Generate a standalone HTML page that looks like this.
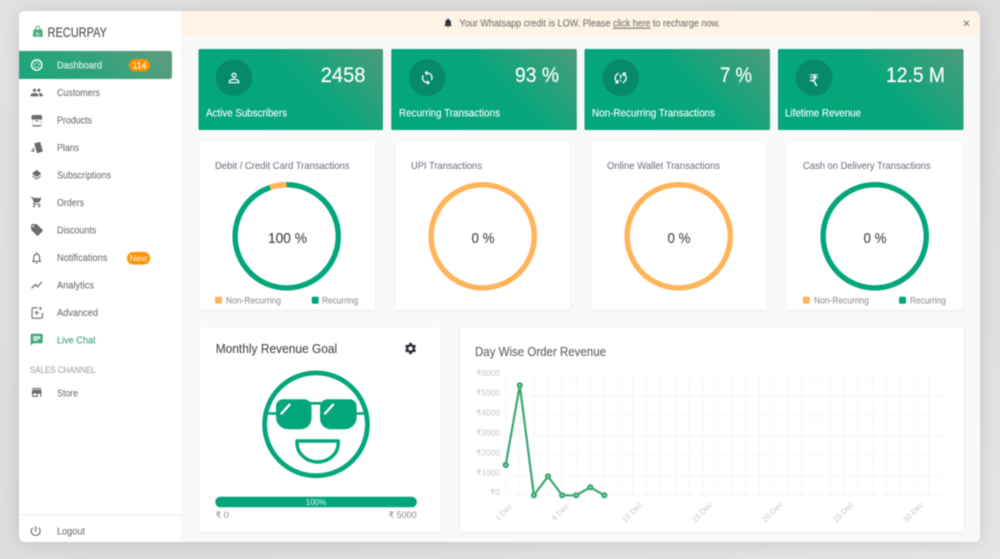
<!DOCTYPE html>
<html><head><meta charset="utf-8"><title>Recurpay Dashboard</title>
<style>
html,body{margin:0;padding:0;width:1000px;height:559px;overflow:hidden;background:#dedede}
svg{display:block;filter:blur(.45px)}
text{font-family:"Liberation Sans","DejaVu Sans",sans-serif}
.m{font-size:10.3px;fill:#717171;stroke:#717171;stroke-width:.1}
.t{font-size:10.4px;fill:#737382;stroke:#737382;stroke-width:.06}
.s{font-size:10.8px;fill:#fff;stroke:#fff;stroke-width:.1}
.n{font-size:21.5px;fill:#fff;stroke:#fff;stroke-width:.15}
.c{font-size:15px;fill:#444;stroke:#444;stroke-width:.1}
.l{font-size:9.4px;fill:#8b8b97;stroke:#8b8b97;stroke-width:.05}
.y{font-size:8.2px;fill:#c6c6c6;text-anchor:end}
.x{font-size:7.8px;fill:#c6c6c6;text-anchor:middle}
.g{stroke:#f4f4f2;stroke-width:.8}
.b{font-size:9.8px;fill:#6c6c6c;stroke:#6c6c6c;stroke-width:.05}
</style></head>
<body>
<svg width="1000" height="559" viewBox="0 0 1000 559" xmlns="http://www.w3.org/2000/svg">
<defs>
<linearGradient id="bg" x1="0" y1="0" x2="1" y2="1"><stop offset="0" stop-color="#e3e3e3"/><stop offset=".6" stop-color="#dcdcdc"/><stop offset="1" stop-color="#e6e6e6"/></linearGradient>
<linearGradient id="s1" gradientUnits="userSpaceOnUse" x1="273" y1="159" x2="383" y2="49"><stop offset="0" stop-color="#03a77b"/><stop offset=".5" stop-color="#0aa67b"/><stop offset="1" stop-color="#4c9b7b"/></linearGradient>
<linearGradient id="s2" gradientUnits="userSpaceOnUse" x1="467" y1="159" x2="577" y2="49"><stop offset="0" stop-color="#03a77b"/><stop offset=".5" stop-color="#0aa67b"/><stop offset="1" stop-color="#4c9b7b"/></linearGradient>
<linearGradient id="s3" gradientUnits="userSpaceOnUse" x1="660" y1="159" x2="770" y2="49"><stop offset="0" stop-color="#03a77b"/><stop offset=".5" stop-color="#0aa67b"/><stop offset="1" stop-color="#4c9b7b"/></linearGradient>
<linearGradient id="s4" gradientUnits="userSpaceOnUse" x1="853" y1="159" x2="963" y2="49"><stop offset="0" stop-color="#03a77b"/><stop offset=".5" stop-color="#0aa67b"/><stop offset="1" stop-color="#4c9b7b"/></linearGradient>
<linearGradient id="ac" gradientUnits="userSpaceOnUse" x1="62" y1="161" x2="172" y2="51"><stop offset="0" stop-color="#14a67b"/><stop offset=".55" stop-color="#2fa37c"/><stop offset="1" stop-color="#5f9c7f"/></linearGradient>
<filter id="sh" x="-10%" y="-10%" width="120%" height="120%"><feDropShadow dx="0" dy="0" stdDeviation="9" flood-color="#000" flood-opacity=".13"/></filter>
<filter id="cs" x="-5%" y="-5%" width="110%" height="110%"><feDropShadow dx="0" dy=".6" stdDeviation="1" flood-color="#000" flood-opacity=".09"/></filter>
<clipPath id="win"><rect x="19" y="11" width="961" height="531" rx="6"/></clipPath>
</defs>
<rect width="1000" height="559" fill="url(#bg)"/>
<rect x="19" y="11" width="961" height="531" rx="6" fill="#f9f9f9" filter="url(#sh)"/>
<g clip-path="url(#win)">
<rect x="19" y="11" width="163" height="531" fill="#fff"/>
<rect x="181.5" y="11" width=".8" height="531" fill="#f0f0f0"/>
<rect x="182" y="11" width="798" height="25" fill="#fef3e5"/>
<rect x="19" y="50" width="163" height=".7" fill="#f4f4f4"/>
<rect x="19" y="514.5" width="163" height=".8" fill="#ececec"/>
</g>

<!-- logo -->
<path d="M33.5 29.5h8.8l.6 7.3h-10z" fill="#45ab7a"/>
<path d="M35.7 30v-1.6a2.1 2.1 0 0 1 4.2 0V30" fill="none" stroke="#45ab7a" stroke-width="1"/>
<path d="M35.5 32.2a3.5 3.5 0 0 1 3.6 3.6M35.5 34a1.7 1.7 0 0 1 1.8 1.8" fill="none" stroke="#fff" stroke-width=".7"/>
<text x="47.5" y="36.8" font-size="13.8" fill="#4a4a4a" stroke="#4a4a4a" stroke-width=".06" textLength="59.5" lengthAdjust="spacingAndGlyphs">RECURPAY</text>

<!-- active -->
<path d="M19 51h150.5a2.5 2.5 0 0 1 2.5 2.5v23a2.5 2.5 0 0 1-2.5 2.5H19z" fill="url(#ac)"/>
<circle cx="36.7" cy="65" r="5.2" fill="none" stroke="#fff" stroke-width="1.4"/>
<g fill="#fff"><circle cx="36.7" cy="62.4" r=".8"/><circle cx="34.3" cy="64.2" r=".8"/><circle cx="39.1" cy="64.2" r=".8"/><circle cx="35.2" cy="67.1" r=".8"/><circle cx="38.2" cy="67.1" r=".8"/></g>
<text x="57" y="68.6" class="m" style="fill:#e9f5f0;stroke:#e9f5f0" textLength="45" lengthAdjust="spacingAndGlyphs">Dashboard</text>
<rect x="129" y="59" width="21" height="12.5" rx="6.2" fill="#ff9100"/>
<text x="139.5" y="68.3" font-size="9" fill="#fff1dc" stroke="#fff1dc" stroke-width=".15" text-anchor="middle">114</text>

<!-- menu -->
<text x="57" y="96.1" class="m" textLength="43" lengthAdjust="spacingAndGlyphs">Customers</text>
<text x="57" y="123.6" class="m" textLength="35" lengthAdjust="spacingAndGlyphs">Products</text>
<text x="57" y="151.1" class="m" textLength="22" lengthAdjust="spacingAndGlyphs">Plans</text>
<text x="57" y="178.6" class="m" textLength="54" lengthAdjust="spacingAndGlyphs">Subscriptions</text>
<text x="57" y="206.1" class="m" textLength="27" lengthAdjust="spacingAndGlyphs">Orders</text>
<text x="57" y="233.6" class="m" textLength="39.3" lengthAdjust="spacingAndGlyphs">Discounts</text>
<text x="57" y="261.1" class="m" textLength="50.5" lengthAdjust="spacingAndGlyphs">Notifications</text>
<text x="57" y="288.6" class="m" textLength="37" lengthAdjust="spacingAndGlyphs">Analytics</text>
<text x="57" y="316.1" class="m" textLength="41" lengthAdjust="spacingAndGlyphs">Advanced</text>
<text x="57" y="343.6" class="m" style="fill:#3fa67c;stroke:#3fa67c" textLength="38.5" lengthAdjust="spacingAndGlyphs">Live Chat</text>
<text x="30" y="372.8" font-size="9.3" fill="#a2a2a2" stroke="#a2a2a2" stroke-width=".08" textLength="65.5" lengthAdjust="spacingAndGlyphs">SALES CHANNEL</text>
<text x="57" y="396.6" class="m" textLength="21" lengthAdjust="spacingAndGlyphs">Store</text>
<text x="57" y="534.6" class="m" textLength="28" lengthAdjust="spacingAndGlyphs">Logout</text>

<rect x="127" y="252" width="23" height="12.5" rx="6.2" fill="#ff9100" stroke="#ffc069" stroke-width=".7"/>
<text x="138.5" y="261.4" font-size="8.8" fill="#ffe7c6" stroke="#ffe7c6" stroke-width=".1" text-anchor="middle">New</text>

<!-- menu icons -->
<g fill="#6c6c6c">
<path transform="translate(30.1 85.9) scale(.55)" d="M16 11c1.66 0 2.99-1.34 2.99-3S17.66 5 16 5c-1.66 0-3 1.34-3 3s1.34 3 3 3zm-8 0c1.66 0 2.99-1.34 2.99-3S9.66 5 8 5C6.34 5 5 6.34 5 8s1.34 3 3 3zm0 2c-2.33 0-7 1.17-7 3.5V19h14v-2.5c0-2.33-4.67-3.5-7-3.5zm8 0c-.29 0-.62.02-.97.05 1.16.84 1.97 1.97 1.97 3.45V19h6v-2.5c0-2.33-4.67-3.5-7-3.5z"/>
<path d="M33 115h7.6a1.5 1.5 0 0 1 1.5 1.5v3h-.9v6.2a.8.8 0 0 1-.8.8h-7.2a.8.8 0 0 1-.8-.8v-6.2h-.9v-3a1.5 1.5 0 0 1 1.5-1.5zm-.3 4.5v5.8h8.2v-5.8z" fill-rule="evenodd"/>
<rect x="35" y="120.4" width="3.6" height="1" fill="#6c6c6c"/>
<path d="M34.9 143.3l4.4-1.3a.8.8 0 0 1 1 .5l2.4 8.2a.8.8 0 0 1-.5 1l-4.4 1.3a.8.8 0 0 1-1-.5l-2.4-8.2a.8.8 0 0 1 .5-1z"/>
<path d="M33.6 146.5l-1.5 4.8 2.3.8zM31.6 149.5l-.8 2.2 1.1.4z"/>
<path transform="translate(30.4 168.8) scale(.52)" d="M11.99 18.54l-7.37-5.73L3 14.07l9 7 9-7-1.63-1.27-7.38 5.74zM12 16l7.36-5.73L21 9l-9-7-9 7 1.63 1.27L12 16z"/>
<path transform="translate(30.4 195.8) scale(.52)" d="M7 18c-1.1 0-1.99.9-1.99 2S5.9 22 7 22s2-.9 2-2-.9-2-2-2zM1 2v2h2l3.6 7.59-1.35 2.45c-.16.28-.25.61-.25.96 0 1.1.9 2 2 2h12v-2H7.42c-.14 0-.25-.11-.25-.25l.03-.12.9-1.63h7.45c.75 0 1.41-.41 1.75-1.03l3.58-6.49c.08-.14.12-.31.12-.48 0-.55-.45-1-1-1H5.21l-.94-2H1zm16 16c-1.1 0-1.99.9-1.99 2s.89 2 1.99 2 2-.9 2-2-.9-2-2-2z"/>
<path transform="translate(30 223) scale(.58)" d="M21.41 11.58l-9-9C12.05 2.22 11.55 2 11 2H4c-1.1 0-2 .9-2 2v7c0 .55.22 1.05.59 1.42l9 9c.36.36.86.58 1.41.58.55 0 1.05-.22 1.41-.59l7-7c.37-.36.59-.86.59-1.41 0-.55-.23-1.06-.59-1.42zM5.5 7C4.67 7 4 6.33 4 5.5S4.67 4 5.5 4 7 4.67 7 5.5 6.33 7 5.5 7z"/>
<path transform="translate(29.7 251) scale(.58)" d="M12 22c1.1 0 2-.9 2-2h-4c0 1.1.9 2 2 2zm6-6v-5c0-3.07-1.63-5.64-4.5-6.32V4c0-.83-.67-1.5-1.5-1.5s-1.5.67-1.5 1.5v.68C7.64 5.36 6 7.92 6 11v5l-2 2v1h16v-1l-2-2zm-2 1H8v-6c0-2.48 1.51-4.5 4-4.5s4 2.02 4 4.5v6z"/>
<path transform="translate(29.9 278.2) scale(.57)" d="M3.5 18.49l6-6.01 4 4L22 6.92l-1.41-1.41-7.09 7.97-4-4L2 16.99z"/>
<path transform="translate(30 385.7) scale(.56)" d="M20 4H4v2h16V4zm1 10v-2l-1-5H4l-1 5v2h1v6h10v-6h4v6h2v-6h1zm-9 4H6v-4h6v4z"/>
<path transform="translate(29 524.3) scale(.56)" d="M13 3h-2v10h2V3zm4.83 2.17l-1.42 1.42C17.99 7.86 19 9.81 19 12c0 3.87-3.13 7-7 7s-7-3.13-7-7c0-2.19 1.01-4.14 2.58-5.42L6.17 5.17C4.23 6.82 3 9.26 3 12c0 4.97 4.03 9 9 9s9-4.03 9-9c0-2.74-1.23-5.18-3.17-6.83z"/>
</g>
<path d="M37.5 307.8h-4.5a1 1 0 0 0-1 1v8.4a1 1 0 0 0 1 1h8.4a1 1 0 0 0 1-1v-4.5" fill="none" stroke="#6c6c6c" stroke-width="1.1"/>
<path d="M36.7 310.5v4.5M34.5 312.7h4.5M40.4 307v3M38.9 308.5h3" stroke="#6c6c6c" stroke-width="1" fill="none"/>
<path transform="translate(29.5 332.5) scale(.6)" fill="#3fa67c" d="M20 2H4c-1.1 0-1.99.9-1.99 2L2 22l4-4h14c1.1 0 2-.9 2-2V4c0-1.1-.9-2-2-2zM6 9h12v2H6V9zm8 5H6v-2h8v2zm4-6H6V6h12v2z"/>

<!-- banner -->
<path transform="translate(442.6 17.3) scale(.46)" fill="#2a3140" d="M12 22c1.1 0 2-.9 2-2h-4c0 1.1.89 2 2 2zm6-6v-5c0-3.07-1.64-5.64-4.5-6.32V4c0-.83-.67-1.5-1.5-1.5s-1.5.67-1.5 1.5v.68C7.63 5.36 6 7.92 6 11v5l-2 2v1h16v-1l-2-2z"/>
<text x="459.5" y="26.7" class="b" textLength="151" lengthAdjust="spacingAndGlyphs">Your Whatsapp credit is LOW. Please</text>
<text x="613" y="26.7" class="b" text-decoration="underline" textLength="37.5" lengthAdjust="spacingAndGlyphs">click here</text>
<text x="652.7" y="26.7" class="b" textLength="67.5" lengthAdjust="spacingAndGlyphs">to recharge now.</text>
<path d="M964 20.8l5 5M969 20.8l-5 5" stroke="#666" stroke-width=".95"/>

<!-- stat cards -->
<g>
<rect x="198.5" y="49" width="184.5" height="81" rx="1.5" fill="url(#s1)"/>
<rect x="391.3" y="49" width="185.5" height="81" rx="1.5" fill="url(#s2)"/>
<rect x="584.5" y="49" width="185.5" height="81" rx="1.5" fill="url(#s3)"/>
<rect x="778" y="49" width="185.5" height="81" rx="1.5" fill="url(#s4)"/>
<g fill="#068a68"><circle cx="234" cy="77.7" r="18.3"/><circle cx="427.3" cy="77.7" r="18.3"/><circle cx="620.7" cy="77.7" r="18.3"/><circle cx="814" cy="77.7" r="18.3"/></g>
<path transform="translate(226.1 70) scale(.66)" fill="#fff" d="M12 5.9c1.16 0 2.1.94 2.1 2.1s-.94 2.1-2.1 2.1S9.9 9.16 9.9 8s.94-2.1 2.1-2.1m0 9c2.97 0 6.1 1.46 6.1 2.1v1.1H5.9V17c0-.64 3.13-2.1 6.1-2.1M12 4C9.79 4 8 5.79 8 8s1.79 4 4 4 4-1.79 4-4-1.79-4-4-4zm0 9c-2.67 0-8 1.34-8 4v3h16v-3c0-2.66-5.33-4-8-4z"/>
<path transform="translate(419.1 69.6) scale(.68)" fill="#fff" d="M12 4V1L8 5l4 4V6c3.31 0 6 2.69 6 6 0 1.01-.25 1.97-.7 2.8l1.46 1.46C19.54 15.03 20 13.57 20 12c0-4.42-3.58-8-8-8zm0 14c-3.31 0-6-2.69-6-6 0-1.01.25-1.97.7-2.8L5.24 7.74C4.46 8.97 4 10.43 4 12c0 4.42 3.58 8 8 8v3l4-4-4-4v3z"/>
<path transform="translate(612.5 69.8) scale(.68)" fill="#fff" d="M3 12c0 2.21.91 4.2 2.36 5.64L3 20h6v-6l-2.24 2.24C5.68 15.15 5 13.66 5 12c0-2.61 1.67-4.83 4-5.65V4.26C5.55 5.15 3 8.27 3 12zm8 5h2v-2h-2v2zM21 4h-6v6l2.24-2.24C18.32 8.85 19 10.34 19 12c0 2.61-1.67 4.83-4 5.65v2.09c3.45-.89 6-4.01 6-7.74 0-2.21-.91-4.2-2.36-5.64L21 4zm-10 9h2V7h-2v6z"/>
<text x="814" y="86" font-size="16" fill="#fff" text-anchor="middle">₹</text>
<text x="320.7" y="81.8" class="n" textLength="44.8" lengthAdjust="spacingAndGlyphs">2458</text>
<text x="515" y="81.8" class="n" textLength="44" lengthAdjust="spacingAndGlyphs">93 %</text>
<text x="720" y="81.8" class="n" textLength="32" lengthAdjust="spacingAndGlyphs">7 %</text>
<text x="886" y="81.8" class="n" textLength="59" lengthAdjust="spacingAndGlyphs">12.5 M</text>
<text x="206" y="116.4" class="s" textLength="81" lengthAdjust="spacingAndGlyphs">Active Subscribers</text>
<text x="399" y="116.4" class="s" textLength="101" lengthAdjust="spacingAndGlyphs">Recurring Transactions</text>
<text x="592" y="116.4" class="s" textLength="123" lengthAdjust="spacingAndGlyphs">Non-Recurring Transactions</text>
<text x="785" y="116.4" class="s" textLength="76" lengthAdjust="spacingAndGlyphs">Lifetime Revenue</text>
</g>

<!-- donut cards -->
<g fill="#fff" filter="url(#cs)">
<rect x="199" y="142" width="176" height="168" rx="1.5"/>
<rect x="395" y="142" width="175.5" height="168" rx="1.5"/>
<rect x="591" y="142" width="175.5" height="168" rx="1.5"/>
<rect x="786.7" y="142" width="176" height="168" rx="1.5"/>
</g>
<text x="215" y="169.2" class="t" textLength="134.5" lengthAdjust="spacingAndGlyphs">Debit / Credit Card Transactions</text>
<text x="411" y="169.2" class="t" textLength="71" lengthAdjust="spacingAndGlyphs">UPI Transactions</text>
<text x="607" y="169.2" class="t" textLength="113" lengthAdjust="spacingAndGlyphs">Online Wallet Transactions</text>
<text x="803" y="169.2" class="t" textLength="127.5" lengthAdjust="spacingAndGlyphs">Cash on Delivery Transactions</text>

<g fill="none" stroke-width="5.4">
<circle cx="286.7" cy="236.3" r="51.6" stroke="#03a67b"/>
<path d="M270 187.5A51.6 51.6 0 0 1 286.7 184.7" stroke="#ffb45a"/>
<circle cx="482.7" cy="236.3" r="51.6" stroke="#ffb45a"/>
<circle cx="678.7" cy="236.3" r="51.6" stroke="#ffb45a"/>
<circle cx="874.7" cy="236.3" r="51.6" stroke="#03a67b"/>
</g>
<text x="268" y="243" class="c" textLength="39" lengthAdjust="spacingAndGlyphs">100 %</text>
<text x="471.5" y="243" class="c" textLength="23" lengthAdjust="spacingAndGlyphs">0 %</text>
<text x="667.5" y="243" class="c" textLength="23" lengthAdjust="spacingAndGlyphs">0 %</text>
<text x="863.5" y="243" class="c" textLength="23" lengthAdjust="spacingAndGlyphs">0 %</text>

<rect x="215" y="296.7" width="7" height="7" rx="1.2" fill="#ffb45a"/>
<text x="226" y="303.4" class="l" textLength="55" lengthAdjust="spacingAndGlyphs">Non-Recurring</text>
<rect x="311.7" y="296.7" width="7" height="7" rx="1.2" fill="#03a67b"/>
<text x="322" y="303.4" class="l" textLength="36" lengthAdjust="spacingAndGlyphs">Recurring</text>
<rect x="802.8" y="296.7" width="7" height="7" rx="1.2" fill="#ffb45a"/>
<text x="814" y="303.4" class="l" textLength="55" lengthAdjust="spacingAndGlyphs">Non-Recurring</text>
<rect x="899" y="296.7" width="7" height="7" rx="1.2" fill="#03a67b"/>
<text x="910" y="303.4" class="l" textLength="36" lengthAdjust="spacingAndGlyphs">Recurring</text>

<!-- bottom cards -->
<g fill="#fff" filter="url(#cs)">
<rect x="199" y="327" width="242" height="205" rx="1.5"/>
<rect x="460" y="327" width="504" height="205" rx="1.5"/>
</g>
<text x="215.7" y="352.8" font-size="13" fill="#444" stroke="#444" stroke-width=".06" textLength="121.5" lengthAdjust="spacingAndGlyphs">Monthly Revenue Goal</text>
<path transform="translate(403.5 341.5) scale(.585)" fill="#2b2f36" d="M19.14 12.94c.04-.3.06-.61.06-.94 0-.32-.02-.64-.07-.94l2.03-1.58c.18-.14.23-.41.12-.61l-1.92-3.32c-.12-.22-.37-.29-.59-.22l-2.39.96c-.5-.38-1.03-.7-1.62-.94l-.36-2.54c-.04-.24-.24-.41-.48-.41h-3.84c-.24 0-.43.17-.47.41l-.36 2.54c-.59.24-1.13.57-1.62.94l-2.39-.96c-.22-.08-.47 0-.59.22L2.74 8.87c-.12.21-.08.47.12.61l2.03 1.58c-.05.3-.09.63-.09.94s.02.64.07.94l-2.03 1.58c-.18.14-.23.41-.12.61l1.92 3.32c.12.22.37.29.59.22l2.39-.96c.5.38 1.03.7 1.62.94l.36 2.54c.05.24.24.41.48.41h3.84c.24 0 .44-.17.47-.41l.36-2.54c.59-.24 1.13-.56 1.62-.94l2.39.96c.22.08.47 0 .59-.22l1.92-3.32c.12-.22.07-.47-.12-.61l-2.01-1.58zM12 15.6c-1.98 0-3.6-1.62-3.6-3.6s1.62-3.6 3.6-3.6 3.6 1.62 3.6 3.6-1.62 3.6-3.6 3.6z"/>

<!-- smiley -->
<circle cx="316" cy="424.3" r="51.4" fill="none" stroke="#03a67b" stroke-width="4.8"/>
<path d="M267.5 413.5h9M356 413.5h9M310 403.3h11" stroke="#03a67b" stroke-width="2.6" fill="none"/>
<path d="M283 399.3h21a7.5 7.5 0 0 1 7.5 7.5v11.5a11 11 0 0 1-11 11H288a12 12 0 0 1-12-12v-11a7 7 0 0 1 7-7z" fill="#03a67b"/>
<path d="M328 399.3h21.7a7 7 0 0 1 7 7v11a12 12 0 0 1-12 12H331a11 11 0 0 1-11-11v-11.5a7.5 7.5 0 0 1 8-7.5z" fill="#03a67b"/>
<path d="M281.5 413.5l8-8.8M325 413.5l8-8.8" stroke="#fff" stroke-width="2.4" stroke-linecap="round" fill="none"/>
<path d="M297 441h41.3v2a20.65 19 0 0 1-41.3 0z" fill="#fff" stroke="#03a67b" stroke-width="3.4" stroke-linejoin="round"/>

<!-- progress -->
<rect x="215.3" y="496.8" width="201.5" height="10.5" rx="5" fill="#03a67b"/>
<text x="316" y="504.9" font-size="8" fill="#e8f7f2" text-anchor="middle">100%</text>
<text x="215.5" y="518.2" font-size="9" fill="#888">₹ 0</text>
<text x="416.7" y="518.2" font-size="9" fill="#888" text-anchor="end">₹ 5000</text>

<!-- chart -->
<text x="475" y="356.2" font-size="13" fill="#5c5c5c" stroke="#5c5c5c" stroke-width=".06" textLength="131" lengthAdjust="spacingAndGlyphs">Day Wise Order Revenue</text>
<g class="g">
<path d="M505.7 376H942.8M505.7 395.9H942.8M505.7 415.8H942.8M505.7 435.7H942.8M505.7 455.6H942.8M505.7 475.5H942.8M505.7 495.4H942.8"/>
<path d="M505.7 376V495.4M519.8 376V495.4M533.9 376V495.4M548 376V495.4M562.1 376V495.4M576.2 376V495.4M590.3 376V495.4M604.4 376V495.4M618.5 376V495.4M632.6 376V495.4M646.7 376V495.4M660.8 376V495.4M674.9 376V495.4M689 376V495.4M703.1 376V495.4M717.2 376V495.4M731.3 376V495.4M745.4 376V495.4M759.5 376V495.4M773.6 376V495.4M787.7 376V495.4M801.8 376V495.4M815.9 376V495.4M830 376V495.4M844.1 376V495.4M858.2 376V495.4M872.3 376V495.4M886.4 376V495.4M900.5 376V495.4M914.6 376V495.4M928.7 376V495.4"/>
</g>
<text x="499.7" y="375.8" class="y">₹6000</text>
<text x="499.7" y="395.7" class="y">₹5000</text>
<text x="499.7" y="415.6" class="y">₹4000</text>
<text x="499.7" y="435.5" class="y">₹3000</text>
<text x="499.7" y="455.4" class="y">₹2000</text>
<text x="499.7" y="475.3" class="y">₹1000</text>
<text x="499.7" y="495.2" class="y">₹0</text>
<text class="x" transform="translate(505.5 514) rotate(-45)">1 Dec</text>
<text class="x" transform="translate(562 514) rotate(-45)">5 Dec</text>
<text class="x" transform="translate(634 514) rotate(-45)">10 Dec</text>
<text class="x" transform="translate(704 514) rotate(-45)">15 Dec</text>
<text class="x" transform="translate(774 514) rotate(-45)">20 Dec</text>
<text class="x" transform="translate(845 514) rotate(-45)">25 Dec</text>
<text class="x" transform="translate(915 514) rotate(-45)">30 Dec</text>
<path d="M505.7 465L519.8 385.3L533.9 495.3L548 476.3L562.1 495.3L576.2 495.3L590.3 487.3L604.4 495.3" fill="none" stroke="#3aa874" stroke-width="2.2"/>
<g fill="#bfe6d2" stroke="#3aa874" stroke-width="2.2">
<circle cx="505.7" cy="465" r="2"/><circle cx="519.8" cy="385.3" r="2"/><circle cx="533.9" cy="495.3" r="2"/><circle cx="548" cy="476.3" r="2"/><circle cx="562.1" cy="495.3" r="2"/><circle cx="576.2" cy="495.3" r="2"/><circle cx="590.3" cy="487.3" r="2"/><circle cx="604.4" cy="495.3" r="2"/>
</g>
</svg>
</body></html>
